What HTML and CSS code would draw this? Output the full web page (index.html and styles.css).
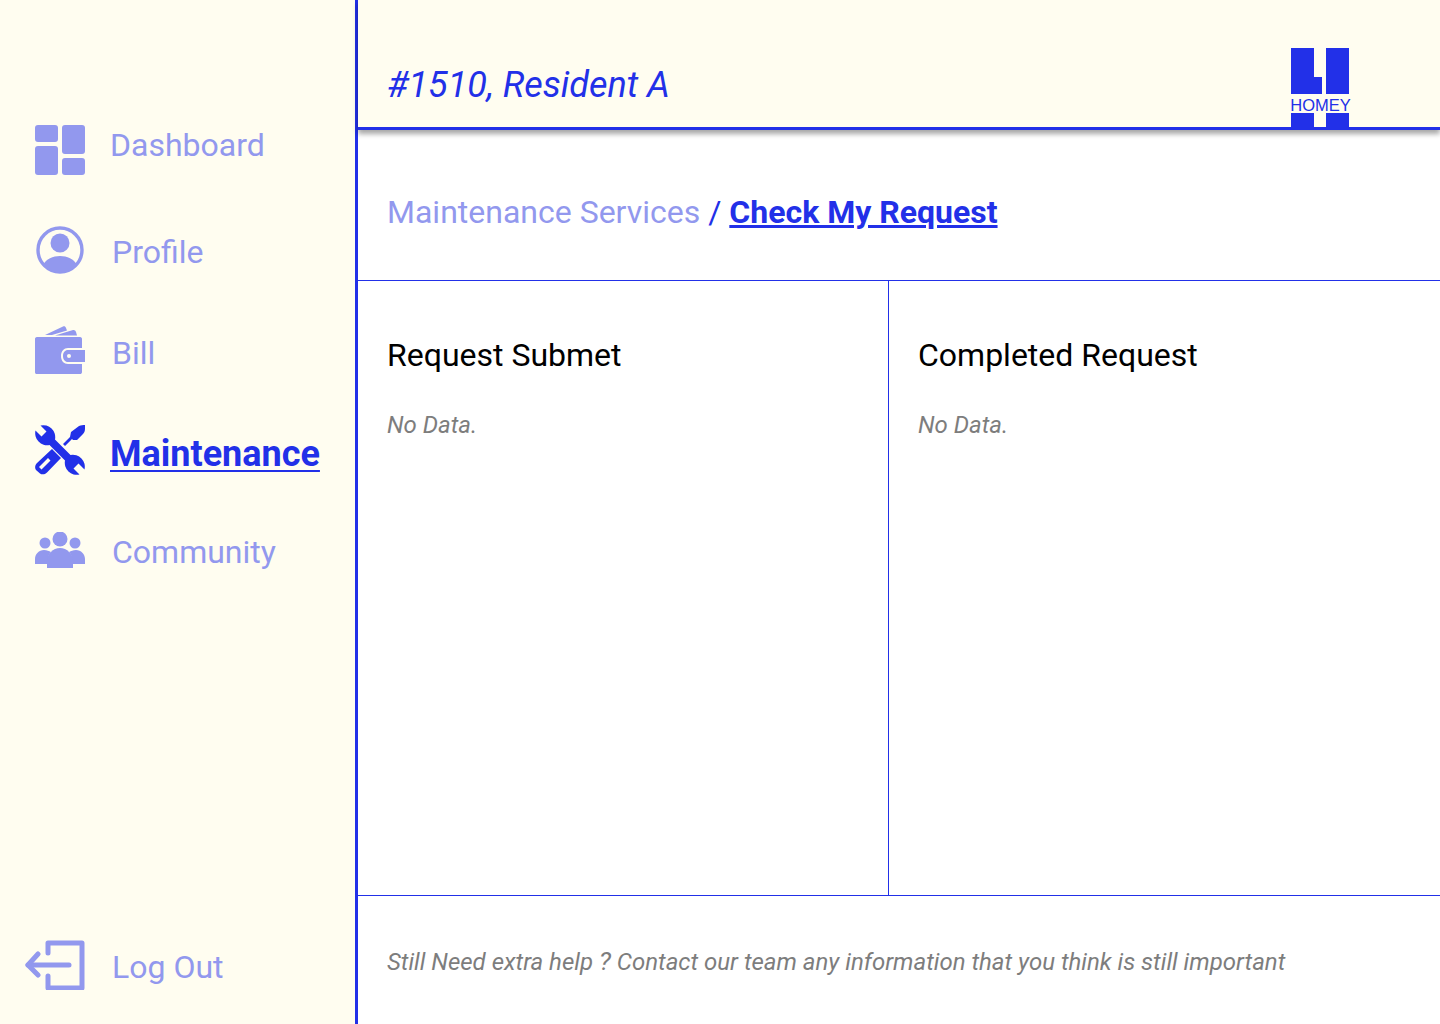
FILE: index.html
```html
<!DOCTYPE html>
<html lang="en">
<head>
  <meta charset="UTF-8">
  <title>Check My Request</title>
  <link rel="stylesheet" href="styles.css">
</head>
<body>
  <div class="app">
    <aside class="sidebar">
      <nav class="nav">
        <a class="nav-item nav-dashboard" href="#">
          <svg class="nav-icon" viewBox="0 0 50 50"><rect x="0" y="0" width="23" height="17" rx="3"/><rect x="27" y="0" width="23" height="29" rx="3"/><rect x="0" y="21" width="23" height="29" rx="3"/><rect x="27" y="33" width="23" height="17" rx="3"/></svg>
          <span>Dashboard</span>
        </a>
        <a class="nav-item nav-profile" href="#">
          <svg class="nav-icon" viewBox="0 0 50 50"><circle cx="25" cy="25" r="22" fill="none" stroke="currentColor" stroke-width="3.4"/><circle cx="25" cy="18" r="9.5"/><path d="M8 40c3-6 10-9 17-9s14 3 17 9c-4 5-10 8-17 8s-13-3-17-8z"/></svg>
          <span>Profile</span>
        </a>
        <a class="nav-item nav-bill" href="#">
          <svg class="nav-icon" viewBox="0 0 50 50"><path d="M10 9L28 .5c1.500-.5 2.500 0 3 1.500l1 2.500L17 9z"/><path d="M20 9.500L38 4c1.500-.3 2.500.5 3 2l1 3.500z"/><path d="M2 11h43c1.500 0 2 1 2 2v9H33c-4 0-7 3-7 8s3 8 7 8h14v8c0 1.500-1 2-2 2H2c-1.500 0-2-.5-2-2V13c0-1 .5-2 2-2z"/><path fill-rule="evenodd" d="M33 24h17v12H33c-3 0-5-2.500-5-6s2-6 5-6zm1 4a2 2 0 1 0 0 4 2 2 0 0 0 0-4z"/></svg>
          <span>Bill</span>
        </a>
        <a class="nav-item nav-maintenance active" href="#">
          <svg class="nav-icon" viewBox="0 0 50 50"><path d="M5.500.5A12 12 0 0 1 20 14.500L35.500 30A12 12 0 0 1 49.500 44.500L43.500 38.500 38.500 43.500 44.500 49.500A12 12 0 0 1 30 35.500L14.500 20A12 12 0 0 1 .5 5.500L6.500 11.500 11.500 6.500z"/><path d="M36 7L44 1c2-1 4-1 6-1v4c0 2-1 4-2 5l-6 6h-4l-1-1-7 7-2-2 7-7z"/><path fill-rule="evenodd" d="M17 24l9 9-14 14.500c-2 2-5 2.500-7 1L1 45c-1.500-2-1-5 1-7zM13 33L4 42l2.500 2.500 9-9z"/></svg>
          <span>Maintenance</span>
        </a>
        <a class="nav-item nav-community" href="#">
          <svg class="nav-icon" viewBox="0 0 50 36"><circle cx="25" cy="7" r="7.500"/><circle cx="10" cy="11" r="5.500"/><circle cx="40" cy="11" r="5.500"/><path d="M0 32v-5c0-5 4-9 9-9 3 0 5 1 7 2-2 2-3 5-3 8v4z"/><path d="M50 32v-5c0-5-4-9-9-9-3 0-5 1-7 2 2 2 3 5 3 8v4z"/><path d="M12 36v-7c0-7 6-13 13-13s13 6 13 13v7c-3 1-23 1-26 0z"/></svg>
          <span>Community</span>
        </a>
      </nav>
      <a class="nav-item logout" href="#">
        <svg class="logout-icon" viewBox="0 0 60 50" fill="none" stroke="currentColor" stroke-width="5" stroke-linecap="round" stroke-linejoin="round"><path d="M23 13V3h34v45H23V36"/><path d="M44 25H3"/><path d="M13 14L3 25l10 10"/></svg>
        <span>Log Out</span>
      </a>
    </aside>

    <main class="main">
      <header class="topbar">
        <h1 class="resident">#1510, Resident A</h1>
        <div class="logo">
          <svg class="logo-mark" viewBox="0 0 58 46"><path d="M0 0h23v29h8v17H0z"/><path d="M35 0h23v46H35z"/></svg>
          <span class="logo-text">HOMEY</span>
          <div class="logo-legs"><i></i><i></i></div>
        </div>
      </header>

      <div class="crumbs">
        <p class="crumb-line"><span class="crumb-parent">Maintenance Services</span> <span class="crumb-sep">/</span> <a class="crumb-current" href="#">Check My Request</a></p>
      </div>

      <section class="panels">
        <div class="panel panel-first">
          <h2>Request Submet</h2>
          <p class="empty">No Data.</p>
        </div>
        <div class="panel">
          <h2>Completed Request</h2>
          <p class="empty">No Data.</p>
        </div>
      </section>

      <footer class="help">Still Need extra help <span class="help-mark">?</span> Contact our team any information that you think is still important</footer>
    </main>
  </div>
</body>
</html>
```

FILE: styles.css
```css
* {
  box-sizing: border-box;
}

body {
  margin: 0;
  font-family: Roboto, sans-serif;
  background: #fff;
}

.app {
  display: flex;
  height: 1024px;
  overflow: hidden;
}

.sidebar {
  width: 358px;
  flex-shrink: 0;
  display: flex;
  flex-direction: column;
  justify-content: space-between;
  padding: 125px 0 34px 35px;
  background: #fffdf0;
  border-right: 3px solid #2230e8;
}

.nav {
  display: flex;
  flex-direction: column;
}

.nav-item {
  display: flex;
  align-items: center;
  gap: 27px;
  font-size: 32px;
  color: #9298ee;
  text-decoration: none;
}

.nav-icon {
  width: 50px;
  height: 50px;
  flex-shrink: 0;
  fill: currentColor;
}

.nav-dashboard {
  gap: 25px;
  margin-bottom: 50px;
}

.nav-dashboard span {
  margin-bottom: 10px;
}

.nav-profile {
  margin-bottom: 51px;
}

.nav-profile span {
  margin-top: 4px;
}

.nav-bill {
  margin-bottom: 49px;
}

.nav-bill span {
  margin-top: 4px;
}

.nav-maintenance {
  margin-bottom: 54px;
}

.nav-community span {
  margin-top: 4px;
}

.nav-community .nav-icon {
  height: 36px;
}

.nav-item.active {
  gap: 25px;
  color: #2230e8;
  font-weight: 700;
  font-size: 36px;
}

.nav-item.active span {
  margin-top: 8px;
  text-decoration: underline;
  text-decoration-thickness: 2px;
  text-underline-offset: 4px;
}

.logout {
  margin-left: -10px;
}

.logout span {
  margin-top: 4px;
}

.logout-icon {
  width: 60px;
  height: 50px;
  flex-shrink: 0;
}

.main {
  flex: 1;
  display: flex;
  flex-direction: column;
  min-width: 0;
}

.topbar {
  height: 130px;
  flex-shrink: 0;
  display: flex;
  justify-content: space-between;
  align-items: flex-end;
  padding: 0 90px 0 29px;
  background: #fffdf0;
  border-bottom: 3px solid #2230e8;
  box-shadow: 0 4px 5px rgba(0, 0, 0, 0.35);
  position: relative;
}

.resident {
  margin: 0 0 21px;
  font-size: 36px;
  font-weight: 400;
  font-style: italic;
  color: #2230e8;
}

.logo {
  width: 60px;
  display: flex;
  flex-direction: column;
  align-items: center;
  color: #2230e8;
}

.logo-mark {
  display: block;
  width: 58px;
  height: 46px;
  fill: currentColor;
}

.logo-text {
  margin-left: 1px;
  padding-top: 3px;
  font-family: "Liberation Sans", sans-serif;
  font-size: 16.500px;
  line-height: 16px;
  white-space: nowrap;
}

.logo-legs {
  display: flex;
  justify-content: space-between;
  width: 58px;
  height: 14px;
}

.logo-legs i {
  width: 23px;
  background: currentColor;
}

.crumbs {
  height: 151px;
  flex-shrink: 0;
  display: flex;
  align-items: center;
  padding: 14px 29px 0;
  font-size: 32px;
  border-bottom: 1px solid #2230e8;
}

.crumb-line {
  margin: 0;
}

.crumb-parent {
  color: #9298ee;
}

.crumb-sep {
  color: #2230e8;
}

.crumb-current {
  font-weight: 700;
  color: #2230e8;
}

.panels {
  height: 615px;
  flex-shrink: 0;
  display: flex;
  border-bottom: 1px solid #2230e8;
}

.panel {
  flex: 1;
  padding: 55px 29px 0;
}

.panel-first {
  flex: none;
  width: 530px;
}

.panel + .panel {
  border-left: 1px solid #2230e8;
}

.panel h2 {
  margin: 0;
  font-size: 32px;
  font-weight: 400;
  line-height: 38px;
  color: #000;
}

.empty {
  margin: 37px 0 0;
  font-size: 24px;
  font-style: italic;
  color: #7d7d7d;
}

.help {
  padding: 52px 29px 0;
  font-size: 24px;
  line-height: 28px;
  font-style: italic;
  color: #7d7d7d;
}

.help-mark {
  font-size: 26px;
  line-height: 20px;
}
```
